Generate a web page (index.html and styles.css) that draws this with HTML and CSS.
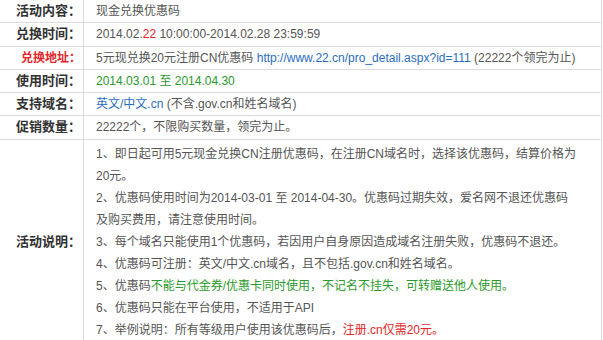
FILE: index.html
```html
<!DOCTYPE html>
<html lang="zh-CN">
<head>
<meta charset="utf-8">
<title>活动信息</title>
<link rel="stylesheet" href="styles.css">
</head>
<body>
<div class="info">
  <div class="row">
    <div class="label">活动内容：</div>
    <div class="value">现金兑换优惠码</div>
  </div>
  <div class="row">
    <div class="label">兑换时间：</div>
    <div class="value">2014.02.<span class="red">22</span> 10:00:00-2014.02.28 23:59:59</div>
  </div>
  <div class="row">
    <div class="label label-red">兑换地址：</div>
    <div class="value">5元现兑换20元注册CN优惠码 <a class="link" href="#">http://www.22.cn/pro_detail.aspx?id=111</a> (22222个领完为止)</div>
  </div>
  <div class="row">
    <div class="label">使用时间：</div>
    <div class="value green">2014.03.01 至 2014.04.30</div>
  </div>
  <div class="row">
    <div class="label">支持域名：</div>
    <div class="value"><a class="link" href="#">英文/中文.cn</a> (不含.gov.cn和姓名域名)</div>
  </div>
  <div class="row">
    <div class="label">促销数量：</div>
    <div class="value">22222个，不限购买数量，领完为止。</div>
  </div>
  <div class="row row-desc">
    <div class="label">活动说明：</div>
    <div class="value desc">
      <p>1、即日起可用5元现金兑换CN注册优惠码，在注册CN域名时，选择该优惠码，结算价格为20元。</p>
      <p>2、优惠码使用时间为2014-03-01 至 2014-04-30。优惠码过期失效，爱名网不退还优惠码及购买费用，请注意使用时间。</p>
      <p>3、每个域名只能使用1个优惠码，若因用户自身原因造成域名注册失败，优惠码不退还。</p>
      <p>4、优惠码可注册：英文/中文.cn域名，且不包括.gov.cn和姓名域名。</p>
      <p>5、优惠码<span class="green">不能与代金券/优惠卡同时使用，不记名不挂失，可转赠送他人使用。</span></p>
      <p>6、优惠码只能在平台使用，不适用于API</p>
      <p>7、举例说明：所有等级用户使用该优惠码后，<span class="red">注册.cn仅需20元。</span></p>
    </div>
  </div>
</div>
</body>
</html>
```

FILE: styles.css
```css
body {
  margin: 0;
  background: #fff;
  font-family: "Liberation Sans", "Noto Sans CJK SC", sans-serif;
}

.info {
  width: 602px;
}

.row {
  display: grid;
  grid-template-columns: 84px 518px;
  border-bottom: 1px solid #dcdcdc;
}

.label {
  display: flex;
  align-items: center;
  justify-content: flex-end;
  padding-right: 2px;
  border-right: 1px solid #dcdcdc;
  font-size: 13px;
  font-weight: bold;
  color: #333;
  line-height: 22.3px;
  white-space: nowrap;
}

.label-red {
  color: #e3262a;
  font-size: 12px;
}

.value {
  padding-left: 12px;
  border-right: 1px solid #dcdcdc;
  font-size: 12px;
  line-height: 22.3px;
  color: #555;
  white-space: nowrap;
}

.desc {
  padding: 3px 23px 3px 12px;
  line-height: 22px;
  white-space: normal;
}

.desc p {
  margin: 0;
}

.red {
  color: #e3262a;
}

.green {
  color: #2a9a2a;
}

.link {
  color: #2a6dbf;
  text-decoration: none;
}
```
